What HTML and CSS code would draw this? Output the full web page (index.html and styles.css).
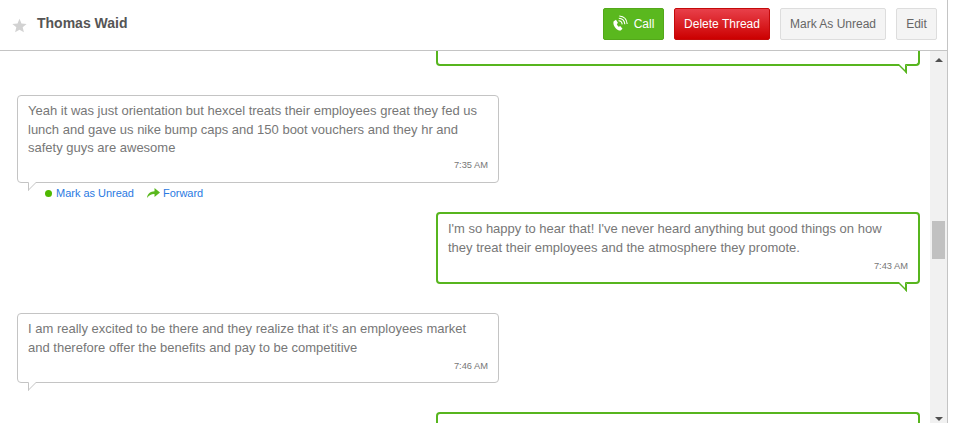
FILE: index.html
```html
<!DOCTYPE html>
<html lang="en">
<head>
  <meta charset="UTF-8">
  <title>Thomas Waid</title>
  <link rel="stylesheet" href="styles.css">
</head>
<body>
  <div class="panel">
    <header class="top">
      <svg class="star" width="15" height="15" viewBox="0 0 16 16"><path d="M8 .8l2.100 5.100 5.500.4-4.200 3.600 1.300 5.400L8 12.400l-4.700 2.900 1.300-5.400L.4 6.300l5.500-.4z"/></svg>
      <h1 class="name">Thomas Waid</h1>
      <div class="actions">
        <button class="btn btn-call">
          <svg width="18" height="18" viewBox="2.500 0 18 18"><path class="fill" d="M3.200 6.200l2.300-1.400 2 3.200-1.200 1c.3 1.100 1 2.200 2 2.800l1.400-.9 2.300 2.900-1.800 1.700C6.800 16 1.600 10.700 3.200 6.200z"/><path class="arc" d="M8 5.800c2 .1 3.500 1.500 3.700 3.600M8.300 3.300c3.400.2 5.700 2.500 6 6M8.800 1c4.300.3 7.500 3.300 7.900 8"/></svg>
          Call
        </button>
        <button class="btn btn-delete">Delete Thread</button>
        <button class="btn btn-plain btn-mark">Mark As Unread</button>
        <button class="btn btn-plain btn-edit">Edit</button>
      </div>
    </header>

    <div class="body">
      <div class="thread">
        <div class="msg msg-out msg-cut"></div>

        <div class="msg msg-in msg-first">
          <p>Yeah it was just orientation but hexcel treats their employees great they fed us lunch and gave us nike bump caps and 150 boot vouchers and they hr and safety guys are awesome</p>
          <div class="time">7:35 AM</div>
        </div>
        <div class="links">
          <a><span class="dot"></span>Mark as Unread</a>
          <a>
            <svg width="13" height="10" viewBox="0 0 13 10"><path d="M0 10C.5 5.500 3.500 3.400 7.500 3.200V0L13 4.600 7.500 9V6C4.500 5.900 2 7 0 10z"/></svg>
            Forward
          </a>
        </div>

        <div class="msg msg-out msg-second">
          <p>I'm so happy to hear that! I've never heard anything but good things on how they treat their employees and the atmosphere they promote.</p>
          <div class="time">7:43 AM</div>
        </div>

        <div class="msg msg-in msg-third">
          <p>I am really excited to be there and they realize that it's an employees market and therefore offer the benefits and pay to be competitive</p>
          <div class="time">7:46 AM</div>
        </div>

        <div class="msg msg-out msg-last"></div>
      </div>

      <div class="scrollbar">
        <div class="arrow arrow-up"></div>
        <div class="thumb"></div>
        <div class="arrow arrow-down"></div>
      </div>
    </div>
  </div>
</body>
</html>
```

FILE: styles.css
```css
html, body {
  margin: 0;
  padding: 0;
  height: 423px;
  overflow: hidden;
  background: #fff;
}
body {
  font-family: "Liberation Sans", Arial, sans-serif;
  font-size: 13px;
  line-height: 1.42857;
  color: #777;
}
.panel {
  width: 947px;
  height: 423px;
  border-right: 1px solid #c4c4c4;
  display: flex;
  flex-direction: column;
}
.top {
  height: 50px;
  flex: none;
  border-bottom: 1px solid #c4c4c4;
  display: flex;
  align-items: center;
  padding: 0 10px 0 12px;
}
.star {
  fill: #d2d2d2;
  margin: 0 10px 0 0;
}
.name {
  margin: 0 0 2px;
  font-size: 14px;
  font-weight: bold;
  color: #555;
}
.actions {
  margin-left: auto;
  display: flex;
  gap: 10px;
  margin-bottom: 2px;
}
.btn {
  height: 32px;
  padding: 0;
  font-family: inherit;
  font-size: 12px;
  white-space: nowrap;
  border-radius: 2px;
  display: flex;
  align-items: center;
  justify-content: center;
}
.btn-call {
  width: 61px;
  gap: 3px;
  color: #fff;
  background: #5ab81e;
  border: 1px solid #53a81a;
}
.btn-call .fill {
  fill: #fff;
}
.btn-call .arc {
  fill: none;
  stroke: #fff;
  stroke-width: 1.1;
}
.btn-delete {
  width: 96px;
  color: #fff;
  background: linear-gradient(#e8404a, #cc0000);
  border: 1px solid #c40a0a;
}
.btn-plain {
  color: #666;
  background: #f4f4f4;
  border: 1px solid #ddd;
}
.btn-mark {
  width: 106px;
}
.btn-edit {
  width: 41px;
}
.body {
  flex: 1;
  min-height: 0;
  display: flex;
}
.thread {
  flex: 1;
  min-width: 0;
  overflow: hidden;
  padding: 0 10px 0 17px;
}
.msg {
  position: relative;
  box-sizing: border-box;
  background: #fff;
  border-radius: 4px;
  padding: 6px 10px;
}
.msg p {
  margin: 0;
}
.time {
  font-size: 9.3px;
  text-align: right;
  margin-top: 3px;
  line-height: 12px;
}
.msg-in {
  width: 482px;
  border: 1px solid #c4c4c4;
}
.msg-out {
  width: 484px;
  margin-left: 419px;
  border: 2px solid #57b51e;
}
.msg::after {
  content: "";
  position: absolute;
  background: #fff;
}
.msg-in::after {
  left: 10px;
  bottom: -5px;
  width: 7px;
  height: 7px;
  border-left: 1px solid #c4c4c4;
  border-bottom: 1px solid #c4c4c4;
  transform: skewY(-45deg);
}
.msg-out::after {
  right: 11px;
  bottom: -6px;
  width: 6px;
  height: 6px;
  border-right: 2px solid #57b51e;
  border-bottom: 2px solid #57b51e;
  transform: skewY(45deg);
}
.msg-cut {
  height: 15px;
  border-top: 0;
  border-radius: 0 0 4px 4px;
}
.msg-first {
  height: 88px;
  margin-top: 29px;
}
.msg-first .time {
  margin-top: 1px;
}
.links {
  display: flex;
  gap: 13px;
  margin: 3px 0 0 28px;
  font-size: 11px;
  letter-spacing: -0.02px;
  line-height: 14px;
  color: #2a7ae2;
}
.links a {
  display: flex;
  align-items: center;
}
.links svg {
  fill: #5ab81e;
  margin-right: 3px;
}
.dot {
  width: 7px;
  height: 7px;
  border-radius: 50%;
  background: #4fb800;
  margin-right: 4px;
}
.msg-second {
  height: 72px;
  margin-top: 12px;
}
.msg-third {
  height: 70px;
  margin-top: 29px;
}
.msg-last {
  height: 30px;
  margin-top: 29px;
  border-bottom: 0;
  border-radius: 4px 4px 0 0;
}
.msg-last::after {
  display: none;
}
.scrollbar {
  width: 17px;
  flex: none;
  background: #f1f1f1;
  display: flex;
  flex-direction: column;
  align-items: center;
}
.arrow {
  width: 0;
  height: 0;
  border-left: 4px solid transparent;
  border-right: 4px solid transparent;
}
.arrow-up {
  margin-top: 7px;
  border-bottom: 4px solid #505050;
}
.arrow-down {
  margin-top: auto;
  margin-bottom: 2px;
  border-top: 4px solid #505050;
}
.thumb {
  width: 13px;
  height: 38px;
  margin-top: 159px;
  background: #c1c1c1;
}
```
